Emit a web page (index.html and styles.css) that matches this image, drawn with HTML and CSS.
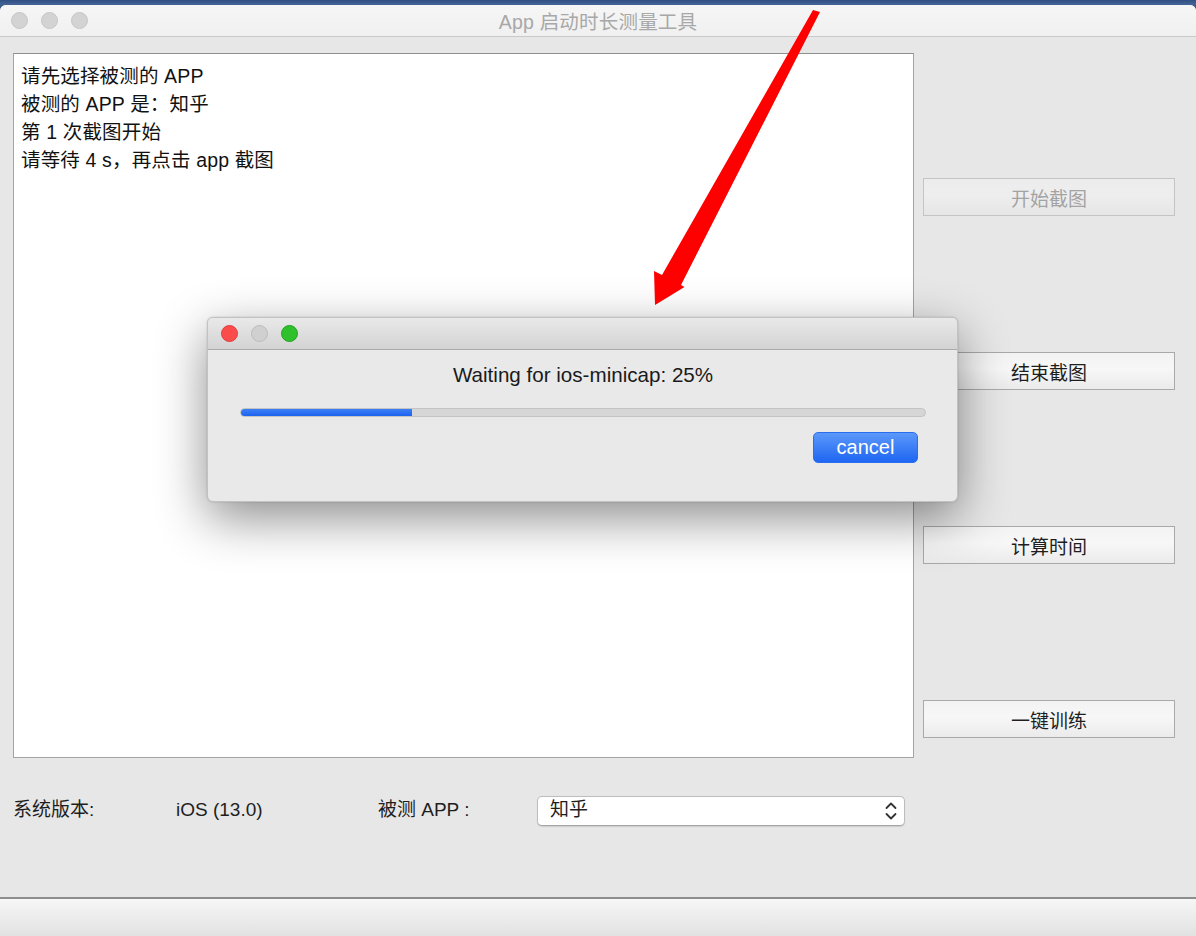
FILE: index.html
```html
<!DOCTYPE html>
<html lang="zh-CN">
<head>
<meta charset="utf-8">
<title>App 启动时长测量工具</title>
<link rel="stylesheet" href="styles.css">
</head>
<body>
<div class="app">
  <div class="desktop-strip"></div>
  <div class="window">
    <div class="titlebar">
      <div class="lights">
        <span class="light off"></span>
        <span class="light off"></span>
        <span class="light off"></span>
      </div>
      <div class="title">App 启动时长测量工具</div>
    </div>
    <div class="content">
      <div class="main">
        <div class="log">
          <div class="line">请先选择被测的 APP</div>
          <div class="line">被测的 APP 是：知乎</div>
          <div class="line">第 1 次截图开始</div>
          <div class="line">请等待 4 s，再点击 app 截图</div>
        </div>
        <div class="actions">
          <button class="btn disabled">开始截图</button>
          <button class="btn">结束截图</button>
          <button class="btn">计算时间</button>
          <button class="btn">一键训练</button>
        </div>
      </div>
      <div class="info-row">
        <div class="label">系统版本:</div>
        <div class="label">iOS (13.0)</div>
        <div class="label">被测 APP :</div>
        <div class="select">
          <span class="select-text">知乎</span>
          <svg class="chevron" width="14" height="22" viewBox="0 0 14 22">
            <path d="M2.5 8 L7 3.5 L11.5 8" fill="none" stroke="#333" stroke-width="1.8" stroke-linecap="round" stroke-linejoin="round"/>
            <path d="M2.5 14 L7 18.5 L11.5 14" fill="none" stroke="#333" stroke-width="1.8" stroke-linecap="round" stroke-linejoin="round"/>
          </svg>
        </div>
      </div>
    </div>
    <div class="statusbar"></div>
  </div>

  <div class="dialog">
    <div class="dialog-titlebar">
      <span class="light red"></span>
      <span class="light gray"></span>
      <span class="light green"></span>
    </div>
    <div class="dialog-body">
      <div class="dialog-text">Waiting for ios-minicap: 25%</div>
      <div class="progress"><div class="progress-fill" style="width:25%"></div></div>
      <div class="dialog-actions">
        <button class="cancel">cancel</button>
      </div>
    </div>
  </div>

  <svg class="arrow" width="1196" height="936" viewBox="0 0 1196 936">
    <polygon points="813,10 820,12 681,285 684.5,287 655,305 654,271 662,275" fill="#ff0000"/>
  </svg>
</div>
</body>
</html>
```

FILE: styles.css
```css
* { box-sizing: border-box; }

html, body {
  margin: 0;
  padding: 0;
}

body {
  width: 1196px;
  height: 936px;
  overflow: hidden;
  background: #3b5a8c;
  font-family: "Liberation Sans", "Noto Sans CJK SC", sans-serif;
  color: #1a1a1a;
}

.app {
  position: relative;
  width: 1196px;
  height: 936px;
  display: flex;
  flex-direction: column;
}

.desktop-strip {
  height: 5px;
  background: linear-gradient(#2f4f82, #46669a);
  flex: none;
}

.window {
  flex: 1;
  display: flex;
  flex-direction: column;
  background: #e7e7e7;
  border-radius: 6px 6px 0 0;
  overflow: hidden;
}

.titlebar {
  position: relative;
  height: 32px;
  flex: none;
  background: linear-gradient(#f6f6f6, #f0f0f0);
  border-bottom: 1px solid #c9c9c9;
  display: flex;
  align-items: center;
  justify-content: center;
}

.lights {
  position: absolute;
  left: 10.5px;
  top: 7px;
  display: flex;
  gap: 13px;
}

.light {
  display: block;
  width: 17px;
  height: 17px;
  border-radius: 50%;
}

.light.off {
  background: #d3d3d3;
  border: 1px solid #c6c6c6;
}

.title {
  font-size: 19.5px;
  color: #a8a8a8;
  letter-spacing: 0.2px;
}

.content {
  flex: 1;
  display: flex;
  flex-direction: column;
  padding: 16px 0 0 13px;
}

.main {
  display: grid;
  grid-template-columns: 901px 252px;
  column-gap: 9px;
}

.log {
  height: 705px;
  background: #ffffff;
  border: 1px solid #a3a3a3;
  border-top-color: #8f8f8f;
  padding: 8px 7px;
  font-size: 19.5px;
  line-height: 28px;
  color: #111;
}

.line {
  letter-spacing: 0.15px;
}

.actions {
  display: flex;
  flex-direction: column;
  gap: 136px;
  padding-top: 125px;
}

.btn {
  height: 38px;
  width: 252px;
  border: 1px solid #a9a9a9;
  background: linear-gradient(#f3f3f3, #f7f7f7 45%, #ebebeb);
  font-family: "Liberation Sans", "Noto Sans CJK SC", sans-serif;
  font-size: 19px;
  color: #1e1e1e;
  padding: 0;
  margin: 0;
}

.btn.disabled {
  color: #a3a3a3;
  border-color: #c4c4c4;
  background: linear-gradient(#ececec, #eeeeee 45%, #e6e6e6);
}

.info-row {
  margin-top: 38px;
  height: 30px;
  display: grid;
  grid-template-columns: 163px 202px 159px 368px;
  align-items: center;
  font-size: 19px;
  color: #1e1e1e;
}

.label {
  line-height: 26px;
  margin-top: -3px;
}

.select {
  height: 30px;
  background: #ffffff;
  border: 1px solid #bdbdbd;
  border-bottom-color: #a5a5a5;
  border-radius: 5px;
  box-shadow: 0 1px 1px rgba(0,0,0,0.12);
  display: flex;
  align-items: center;
  justify-content: space-between;
  padding: 0 6px 0 12px;
}

.select-text {
  line-height: 26px;
  margin-top: -2px;
}

.chevron {
  display: block;
}

.statusbar {
  height: 39px;
  flex: none;
  border-top: 2px solid #8e8e8e;
  background: linear-gradient(#f6f6f6, #e2e2e2);
}

/* dialog overlay */
.dialog {
  position: absolute;
  left: 207px;
  top: 317px;
  width: 751px;
  height: 185px;
  border-radius: 6px;
  overflow: hidden;
  background: #e9e9e9;
  border: 1px solid #c2c2c2;
  box-shadow: 0 16px 50px rgba(0,0,0,0.45), 0 0 2px rgba(0,0,0,0.2);
  display: flex;
  flex-direction: column;
}

.dialog-titlebar {
  height: 32px;
  flex: none;
  background: linear-gradient(#e9e9e9, #d3d3d3);
  border-bottom: 1px solid #ababab;
  display: flex;
  align-items: center;
  gap: 13px;
  padding-left: 12.5px;
}

.light.red {
  background: #fc4b4b;
  border: 1px solid #e03d3d;
}

.light.gray {
  background: #d0d0d0;
  border: 1px solid #bcbcbc;
}

.light.green {
  background: #2ec12c;
  border: 1px solid #22a322;
}

.dialog-body {
  flex: 1;
  padding: 13px 31px 0 32px;
  display: flex;
  flex-direction: column;
}

.dialog-text {
  text-align: center;
  font-size: 20.6px;
  line-height: 24px;
  color: #1a1a1a;
  height: 24px;
}

.progress {
  margin-top: 21px;
  height: 9px;
  border-radius: 5px;
  background: #d6d6d6;
  border: 1px solid #c3c3c3;
  overflow: hidden;
}

.progress-fill {
  height: 100%;
  background: linear-gradient(#3c80f5, #1c63ee);
}

.dialog-actions {
  margin-top: 15px;
  display: flex;
  justify-content: flex-end;
  padding-right: 8px;
}

.cancel {
  width: 105px;
  height: 31px;
  border: 1px solid #2a6ef0;
  border-radius: 5px;
  background: linear-gradient(#5b98fa, #1f66f2);
  color: #ffffff;
  font-family: "Liberation Sans", "Noto Sans CJK SC", sans-serif;
  font-size: 20px;
  padding: 0;
  margin: 0;
}

.arrow {
  position: absolute;
  left: 0;
  top: 0;
  pointer-events: none;
}
```
